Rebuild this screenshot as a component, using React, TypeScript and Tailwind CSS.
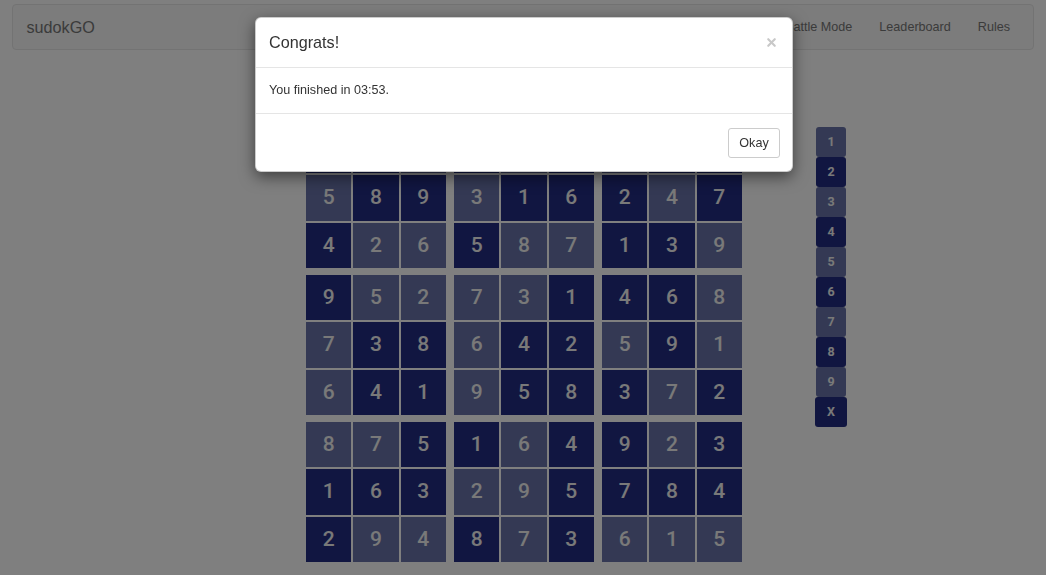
import { X } from "lucide-react";

type Cell = { v: number; fixed: boolean };

// D = given (dark), L = filled by player (light)
const rows: [string, string][] = [
  ["317429856", "DDLDLDLDD"],
  ["589316247", "LDDLDDDLD"],
  ["426587139", "DLLDLLDDL"],
  ["952731468", "DLLLLDDDL"],
  ["738642591", "LDDLDDLDL"],
  ["641958372", "LDDLDDDLD"],
  ["875164923", "LLDDLDDLD"],
  ["163295784", "DDDLLDDDD"],
  ["294873615", "DLLDLDLLL"],
];

const board: Cell[][] = rows.map(([nums, kinds]) =>
  nums.split("").map((n, i) => ({ v: Number(n), fixed: kinds[i] === "D" }))
);

const navLinks = ["Battle Mode", "Leaderboard", "Rules"];

function Box({ br, bc }: { br: number; bc: number }) {
  const cells: Cell[] = [];
  for (let r = 0; r < 3; r++) {
    for (let c = 0; c < 3; c++) cells.push(board[br * 3 + r][bc * 3 + c]);
  }
  return (
    <div className="grid h-[140px] w-[140px] grid-cols-3 grid-rows-3 gap-[2px]">
      {cells.map((cell, i) => (
        <div
          key={i}
          className={`flex items-center justify-center font-['Roboto',sans-serif] text-[21px] font-medium text-[#f2f2f2] ${
            cell.fixed ? "bg-[#222d82]" : "bg-[#6873a8]"
          }`}
        >
          {cell.v}
        </div>
      ))}
    </div>
  );
}

function NumberPad() {
  const keys = ["1", "2", "3", "4", "5", "6", "7", "8", "9"];
  return (
    <div className="flex w-[32px] flex-col items-center">
      {keys.map((k, i) => (
        <button
          key={k}
          className={`h-[30px] w-[30px] rounded-[3px] font-['Roboto',sans-serif] text-[12.5px] font-bold text-[#f2f2f2] ${
            i % 2 === 0 ? "bg-[#6873a8]" : "bg-[#222d82]"
          }`}
        >
          {k}
        </button>
      ))}
      <button className="h-[30px] w-[32px] rounded-[3px] bg-[#222d82] font-['Roboto',sans-serif] text-[12.5px] font-bold text-[#f2f2f2]">
        X
      </button>
    </div>
  );
}

export default function App() {
  return (
    <div className="relative min-h-screen bg-white font-['Liberation_Sans',Arial,sans-serif] text-[#333]">
      <nav className="mx-[12px] mt-[4px] flex h-[46px] items-center justify-between rounded-[4px] border border-[#e7e7e7] bg-[#f8f8f8]">
        <span className="pl-[13.5px] text-[16.2px] text-[#777]">sudokGO</span>
        <ul className="flex pr-[9.5px]">
          {navLinks.map((l) => (
            <li key={l} className="px-[13.5px] text-[12.6px] text-[#777]">
              {l}
            </li>
          ))}
        </ul>
      </nav>

      <main className="mt-[78px] grid grid-cols-[1fr_auto_1fr] pl-[2px]">
        <div />
        <div className="flex flex-col gap-[7px]">
          {[0, 1, 2].map((br) => (
            <div key={br} className="flex gap-[8px]">
              {[0, 1, 2].map((bc) => (
                <Box key={bc} br={br} bc={bc} />
              ))}
            </div>
          ))}
        </div>
        <div className="pl-[73px]">
          <div className="-mt-[1px]">
            <NumberPad />
          </div>
        </div>
      </main>

      {/* backdrop */}
      <div className="fixed inset-0 bg-[rgba(0,0,0,0.5)]" />

      <div className="fixed inset-0 flex justify-center pl-[2px]">
        <div className="mt-[17px] h-fit w-[538px] rounded-[6px] border border-black/20 bg-white shadow-[0_5px_15px_rgba(0,0,0,0.5)]">
          <div className="flex items-center justify-between border-b border-[#e5e5e5] px-[13px] py-[15px]">
            <h4 className="text-[16.2px] leading-[19px] text-[#333]">Congrats!</h4>
            <X size={13} strokeWidth={4} className="mr-[1px] text-[#c8c8c8]" />
          </div>
          <div className="border-b border-[#e5e5e5] px-[13px] pt-[14px] pb-[15px] text-[12.6px] leading-[16px]">
            You finished in 03:53.
          </div>
          <div className="flex justify-end px-[12px] pt-[14px] pb-[13px]">
            <button className="h-[30px] w-[52px] rounded-[3px] border border-[#ccc] bg-white text-[12.6px] text-[#333]">
              Okay
            </button>
          </div>
        </div>
      </div>
    </div>
  );
}
